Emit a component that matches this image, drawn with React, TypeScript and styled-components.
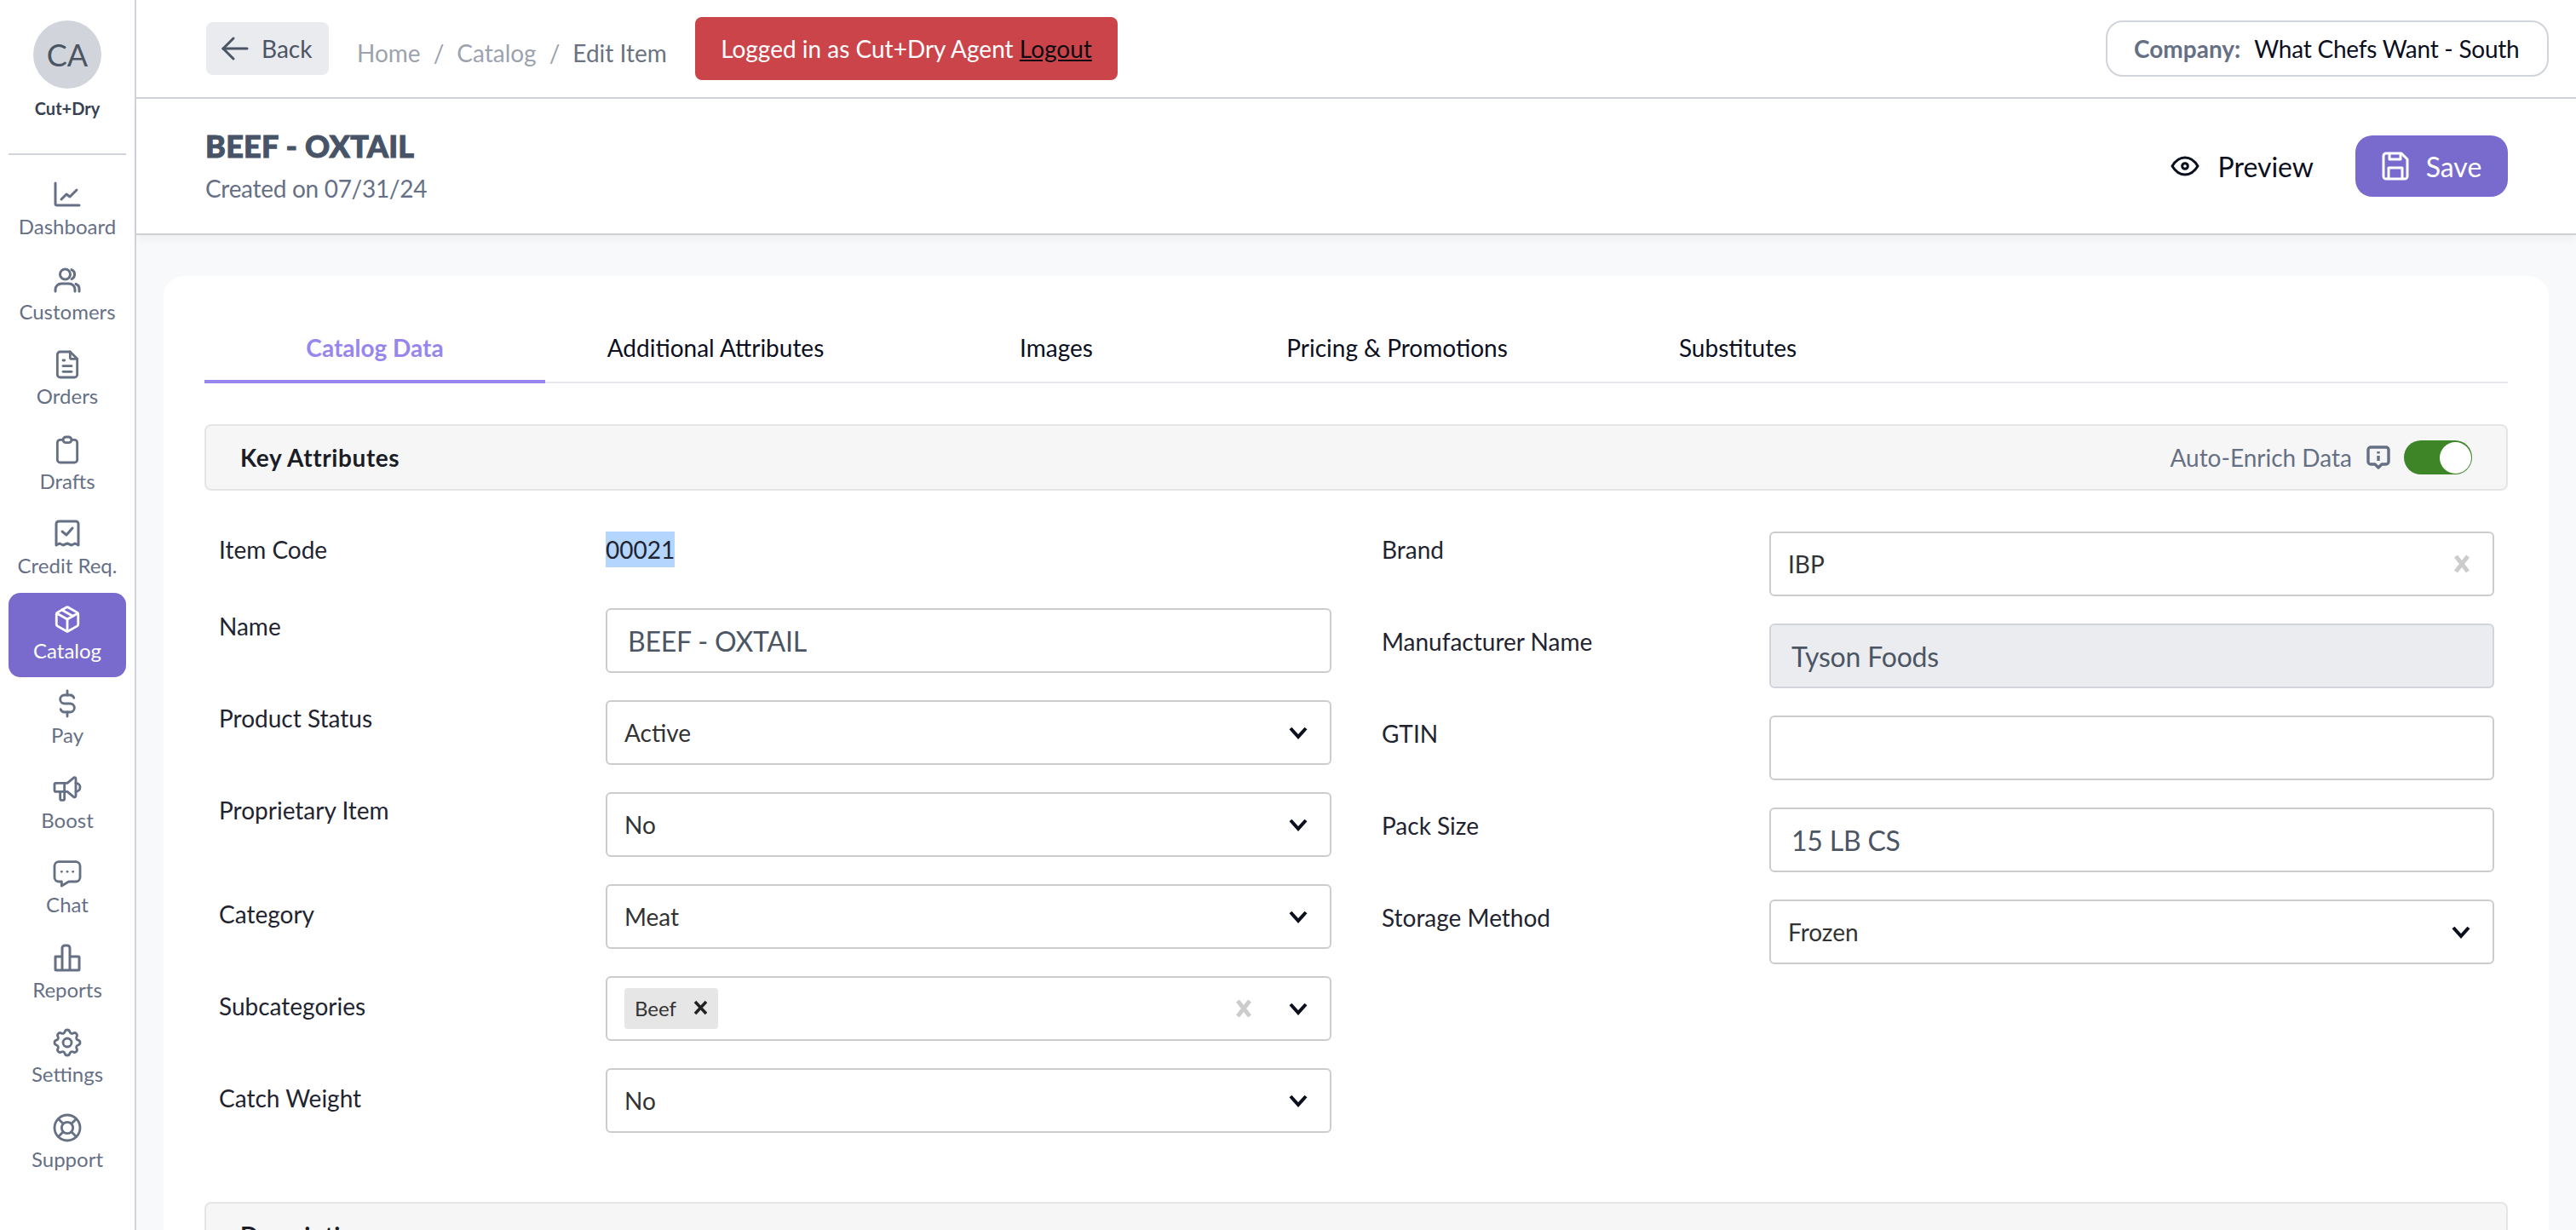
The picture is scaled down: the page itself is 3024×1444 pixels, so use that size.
import React from 'react'
import styled, { createGlobalStyle } from 'styled-components'
import { Package } from 'lucide-react'
import {
  TbArrowLeft,
  TbClipboard,
  TbCurrencyDollar,
  TbEye,
  TbFileText,
  TbLifebuoy,
  TbMessageDots,
  TbSettings,
  TbSpeakerphone,
} from 'react-icons/tb'

const GlobalStyle = createGlobalStyle`
  html, body {
    margin: 0;
    height: 100%;
    overflow: hidden;
    background: #f8f9fb;
    font-family: Lato, "Noto Sans", sans-serif;
  }
  * { box-sizing: border-box; }
`

const Page = styled.div`
  display: flex;
  width: 3024px;
  height: 1444px;
  overflow: hidden;
`

const Sidebar = styled.nav`
  flex: 0 0 160px;
  display: flex;
  flex-direction: column;
  align-items: center;
  background: #fff;
  border-right: 2px solid #d1d5db;
  padding-top: 24px;
`

const Avatar = styled.div`
  width: 80px;
  height: 80px;
  border-radius: 50%;
  background: #d1d5db;
  color: #4b5563;
  font-size: 36px;
  display: flex;
  align-items: center;
  justify-content: center;
`

const OrgName = styled.div`
  margin-top: 11px;
  font-size: 20px;
  line-height: 24px;
  font-weight: 700;
  color: #374151;
`

const NavDivider = styled.div`
  width: 138px;
  height: 2px;
  background: #d1d5db;
  margin: 41px 0 16px;
`

const NavItem = styled.a<{ $active?: boolean }>`
  width: 138px;
  height: 99.5px;
  flex: none;
  display: flex;
  flex-direction: column;
  align-items: center;
  padding-top: 11px;
  border-radius: 14px;
  font-size: 24px;
  line-height: 30px;
  color: ${(p) => (p.$active ? '#fff' : '#667085')};
  background: ${(p) => (p.$active ? '#786bcd' : 'transparent')};
  svg { width: 40px; height: 40px; margin-bottom: 2px; flex: none; }
`

const CatalogIcon = styled(Package)`
  && {
    width: 34px;
    height: 34px;
    margin: 3px 0 5px;
  }
`

const Main = styled.div`
  flex: 1;
  min-width: 0;
  display: flex;
  flex-direction: column;
`

const TopBar = styled.header`
  height: 116px;
  flex: none;
  display: flex;
  align-items: center;
  background: #fff;
  border-bottom: 2px solid #d1d5db;
  padding: 0 32px 0 82px;
`

const BackButton = styled.button`
  width: 144px;
  height: 62px;
  display: flex;
  align-items: center;
  gap: 7px;
  padding: 0 0 0 10px;
  border: 0;
  border-radius: 8px;
  background: #e9ebef;
  color: #4b5563;
  font: 28px Lato, sans-serif;
  svg { width: 48px; height: 48px; flex: none; stroke-width: 1.5; }
`

const Crumbs = styled.div`
  display: flex;
  gap: 15px;
  margin: 10px 0 0 33px;
  font-size: 28px;
  white-space: nowrap;
  color: #9ca3af;
  width: 397px;
`

const CrumbCurrent = styled.span`
  color: #6b7280;
`

const Banner = styled.div`
  width: 496px;
  height: 74px;
  display: flex;
  align-items: center;
  justify-content: center;
  border-radius: 8px;
  background: #cb444a;
  color: #fff;
  font-size: 28px;
  white-space: pre;
  a { color: #0b0b12; text-decoration: underline; }
`

const CompanyBox = styled.div`
  margin-left: auto;
  width: 520px;
  height: 66px;
  display: flex;
  align-items: center;
  padding-left: 31px;
  border: 2px solid #d1d5db;
  border-radius: 20px;
  font-size: 28px;
  white-space: pre;
  color: #0b0f1e;
  b { color: #667085; margin-right: 16px; }
  span { letter-spacing: -0.25px; }
`

const ItemHeader = styled.section`
  height: 160px;
  flex: none;
  display: flex;
  align-items: center;
  justify-content: space-between;
  padding: 0 80px 0 81px;
  background: #fff;
  border-bottom: 2px solid #cdcfd2;
  box-shadow: 0 4px 10px rgba(0, 0, 0, 0.05);
  position: relative;
`

const Title = styled.h1`
  margin: -4px 0 0;
  font-size: 36px;
  line-height: 44px;
  font-weight: 900;
  letter-spacing: 0.25px;
  -webkit-text-stroke: 1px #475467;
  color: #475467;
`

const Created = styled.div`
  margin-top: 11px;
  font-size: 28px;
  line-height: 34px;
  letter-spacing: -0.3px;
  color: #667085;
`

const Actions = styled.div`
  display: flex;
  align-items: center;
  gap: 49px;
`

const PreviewButton = styled.div`
  display: flex;
  align-items: center;
  gap: 18px;
  font-size: 32px;
  color: #0b0f1e;
  svg { width: 40px; height: 40px; stroke-width: 1.8; }
`

const SaveButton = styled.button`
  width: 179px;
  height: 72px;
  display: flex;
  align-items: center;
  justify-content: center;
  gap: 20px;
  border: 0;
  border-radius: 20px;
  background: #786bcd;
  color: #fff;
  font: 32px Lato, sans-serif;
`

const Body = styled.main`
  flex: 1;
  min-height: 0;
  padding: 48px 32px 0;
`

const Card = styled.div`
  background: #fff;
  border-radius: 24px 24px 0 0;
  height: 100%;
  padding: 0 48px;
`

const TabBar = styled.div`
  height: 126px;
  margin-bottom: 48px;
  display: flex;
  align-items: flex-end;
  border-bottom: 2px solid #e5e7eb;
`

const Tab = styled.div<{ $active?: boolean }>`
  width: 400px;
  height: 86px;
  margin-bottom: -2px;
  padding-top: 6px;
  display: flex;
  align-items: center;
  justify-content: center;
  font-size: 28px;
  font-weight: ${(p) => (p.$active ? 700 : 400)};
  color: ${(p) => (p.$active ? '#9686ee' : '#0b0f1e')};
  border-bottom: 4px solid ${(p) => (p.$active ? '#9686ee' : 'transparent')};
`

const SectionBar = styled.div`
  height: 78px;
  display: flex;
  align-items: center;
  padding: 0 40px;
  background: #f6f6f6;
  border: 2px solid #e5e5e5;
  border-radius: 8px;
  font-size: 28px;
  font-weight: 700;
  letter-spacing: 0.6px;
  color: #1a1d26;
`

const AutoEnrich = styled.div`
  margin-left: auto;
  display: flex;
  align-items: center;
  font-weight: 400;
  letter-spacing: 0;
  color: #667085;
`

const InfoIcon = styled.svg`
  width: 28px;
  height: 28px;
  margin: 0 16px 0 17px;
`

const Toggle = styled.div`
  width: 80px;
  height: 40px;
  display: flex;
  justify-content: flex-end;
  align-items: center;
  padding: 0 1.5px;
  border-radius: 20px;
  background: #3d8527;
  &::after {
    content: '';
    width: 37px;
    height: 37px;
    border-radius: 50%;
    background: #fff;
  }
`

const FormGrid = styled.div`
  display: grid;
  grid-template-columns: 1fr 1fr;
  column-gap: 59px;
  padding: 48px 16px 0 17px;
  margin-bottom: 81px;
`

const FormColumn = styled.div`
  display: flex;
  flex-direction: column;
  gap: 32px;
`

const Row = styled.div<{ $short?: boolean; $labelWidth?: number }>`
  display: grid;
  grid-template-columns: ${(p) => p.$labelWidth ?? 454}px 1fr;
  min-height: ${(p) => (p.$short ? '58px' : '76px')};
`

const Label = styled.label<{ $center?: boolean }>`
  font-size: 28px;
  line-height: 34px;
  color: #1f2430;
  padding-top: ${(p) => (p.$center ? '18px' : '4px')};
`

const Field = styled.div<{ $disabled?: boolean }>`
  height: 76px;
  display: flex;
  align-items: center;
  padding: 0 20px;
  border: 2px solid ${(p) => (p.$disabled ? '#d1d5db' : '#cccccc')};
  border-radius: 6px;
  background: ${(p) => (p.$disabled ? '#eaecf0' : '#fff')};
  font-size: 28px;
  color: #333;
`

const InputText = styled.span`
  margin-left: 4px;
  font-size: 32px;
  letter-spacing: -0.2px;
  color: #4b5563;
`

const PlainValue = styled.div`
  font-size: 28px;
  color: #1f2430;
  span {
    display: inline-block;
    line-height: 42px;
    background: #b4d5fe;
  }
`

const Chip = styled.span`
  display: flex;
  align-items: center;
  height: 48px;
  width: 110px;
  padding: 0 2px 2px 12px;
  justify-content: space-between;
  background: #e6e6e6;
  border-radius: 4px;
  font-size: 24px;
  color: #333;
`

const Spacer = styled.div`
  flex: 1;
`

const ClearGlyph = styled.svg<{ $dark?: boolean }>`
  width: 20px;
  height: 22px;
  flex: none;
  margin-right: ${(p) => (p.$dark ? 8 : 6)}px;
  stroke: ${(p) => (p.$dark ? '#222' : '#cccccc')};
  stroke-width: ${(p) => (p.$dark ? 3.5 : 5)};
  fill: none;
`

const Chevron = styled.svg`
  width: 24px;
  height: 24px;
  flex: none;
  margin-left: 36px;
  margin-right: 5px;
  stroke: #0b0f1e;
  stroke-width: 4;
  fill: none;
`

const ChevronIcon = () => (
  <Chevron viewBox="0 0 24 24">
    <path d="M3 7l9 10 9-10" />
  </Chevron>
)

const ClearIcon = ({ dark }: { dark?: boolean }) => (
  <ClearGlyph viewBox="0 0 20 22" $dark={dark}>
    {dark ? <path d="M3 4l13 14M16 4L3 18" /> : <path d="M3 2l14 18M17 2L3 20" />}
  </ClearGlyph>
)

const SelectField = ({ value }: { value: string }) => (
  <Field>
    {value}
    <Spacer />
    <ChevronIcon />
  </Field>
)

// drawn icons share the 40px nav box
const NavSvg = ({ children }: { children: React.ReactNode }) => (
  <svg viewBox="0 0 40 40" fill="none" stroke="currentColor" strokeWidth="3" strokeLinecap="round" strokeLinejoin="round">
    {children}
  </svg>
)

const ChartIcon = () => (
  <NavSvg>
    <path d="M6 6v24a2 2 0 0 0 2 2h26" />
    <path d="M13 25l6-6 4 3 8-8" />
  </NavSvg>
)

const CustomersIcon = () => (
  <NavSvg>
    <circle cx="17.5" cy="13" r="6" />
    <path d="M25 7.5a6 6 0 0 1 0 11" />
    <path d="M6 33v-2a7 7 0 0 1 7-7h9a7 7 0 0 1 7 7v2" />
    <path d="M30 24.5a6 6 0 0 1 4 6V33" />
  </NavSvg>
)

const ReceiptIcon = () => (
  <NavSvg>
    <path d="M7 33V8a3 3 0 0 1 3-3h20a3 3 0 0 1 3 3v25l-4-2-4 2-5-2-5 2-4-2z" />
    <path d="M14 17l5 4 7-8" />
  </NavSvg>
)

const ReportsIcon = () => (
  <NavSvg>
    <path d="M6 18h8v16H7a1 1 0 0 1-1-1zM14 8a3 3 0 0 1 3-3h3a3 3 0 0 1 3 3v26h-9zM23 18h10a1 1 0 0 1 1 1v14a1 1 0 0 1-1 1H23z" />
  </NavSvg>
)

const SaveIcon = () => (
  <svg width="32" height="34" viewBox="0 0 32 34" fill="none" stroke="currentColor" strokeWidth="3" strokeLinejoin="round">
    <path d="M5 2h18l7 7v20a3 3 0 0 1-3 3H5a3 3 0 0 1-3-3V5a3 3 0 0 1 3-3z" />
    <path d="M9 2v7h13V2M8 32V19h16v13" />
  </svg>
)

const navItems = [
  { label: 'Dashboard', icon: <ChartIcon /> },
  { label: 'Customers', icon: <CustomersIcon /> },
  { label: 'Orders', icon: <TbFileText strokeWidth={1.7} /> },
  { label: 'Drafts', icon: <TbClipboard strokeWidth={1.7} /> },
  { label: 'Credit Req.', icon: <ReceiptIcon /> },
  { label: 'Catalog', icon: <CatalogIcon />, active: true },
  { label: 'Pay', icon: <TbCurrencyDollar strokeWidth={1.7} /> },
  { label: 'Boost', icon: <TbSpeakerphone strokeWidth={1.7} /> },
  { label: 'Chat', icon: <TbMessageDots strokeWidth={1.7} /> },
  { label: 'Reports', icon: <ReportsIcon /> },
  { label: 'Settings', icon: <TbSettings strokeWidth={1.7} /> },
  { label: 'Support', icon: <TbLifebuoy strokeWidth={1.7} /> },
]

const tabs = ['Catalog Data', 'Additional Attributes', 'Images', 'Pricing & Promotions', 'Substitutes']

const App = () => {
  return (
    <Page>
      <GlobalStyle />
      <Sidebar>
        <Avatar>CA</Avatar>
        <OrgName>Cut+Dry</OrgName>
        <NavDivider />
        {navItems.map((item) => (
          <NavItem key={item.label} $active={item.active}>
            {item.icon}
            {item.label}
          </NavItem>
        ))}
      </Sidebar>
      <Main>
        <TopBar>
          <BackButton>
            <TbArrowLeft />
            Back
          </BackButton>
          <Crumbs>
            <span>Home</span>
            <span>/</span>
            <span>Catalog</span>
            <span>/</span>
            <CrumbCurrent>Edit Item</CrumbCurrent>
          </Crumbs>
          <Banner>
            Logged in as Cut+Dry Agent <a>Logout</a>
          </Banner>
          <CompanyBox>
            <b>Company:</b> <span>What Chefs Want - South</span>
          </CompanyBox>
        </TopBar>
        <ItemHeader>
          <div>
            <Title>BEEF - OXTAIL</Title>
            <Created>Created on 07/31/24</Created>
          </div>
          <Actions>
            <PreviewButton>
              <TbEye />
              Preview
            </PreviewButton>
            <SaveButton>
              <SaveIcon />
              Save
            </SaveButton>
          </Actions>
        </ItemHeader>
        <Body>
          <Card>
            <TabBar>
              {tabs.map((tab, i) => (
                <Tab key={tab} $active={i === 0}>
                  {tab}
                </Tab>
              ))}
            </TabBar>
            <SectionBar>
              Key Attributes
              <AutoEnrich>
                Auto-Enrich Data
                <InfoIcon viewBox="0 0 28 28" fill="none" stroke="#667085" strokeWidth="3.4" strokeLinejoin="round">
                  <path d="M5 2h18a3 3 0 0 1 3 3v14a3 3 0 0 1-3 3h-5l-4 4-4-4H5a3 3 0 0 1-3-3V5a3 3 0 0 1 3-3z" />
                  <path d="M14 7v2.5M14 12v6" />
                </InfoIcon>
                <Toggle />
              </AutoEnrich>
            </SectionBar>
            <FormGrid>
              <FormColumn>
                <Row $short>
                  <Label>Item Code</Label>
                  <PlainValue>
                    <span>00021</span>
                  </PlainValue>
                </Row>
                <Row>
                  <Label>Name</Label>
                  <Field>
                    <InputText>BEEF - OXTAIL</InputText>
                  </Field>
                </Row>
                <Row>
                  <Label>Product Status</Label>
                  <SelectField value="Active" />
                </Row>
                <Row>
                  <Label>Proprietary Item</Label>
                  <SelectField value="No" />
                </Row>
                <Row>
                  <Label $center>Category</Label>
                  <SelectField value="Meat" />
                </Row>
                <Row>
                  <Label $center>Subcategories</Label>
                  <Field>
                    <Chip>
                      Beef
                      <ClearIcon dark />
                    </Chip>
                    <Spacer />
                    <ClearIcon />
                    <ChevronIcon />
                  </Field>
                </Row>
                <Row>
                  <Label $center>Catch Weight</Label>
                  <SelectField value="No" />
                </Row>
              </FormColumn>
              <FormColumn>
                <Row $labelWidth={455}>
                  <Label>Brand</Label>
                  <Field>
                    IBP
                    <Spacer />
                    <ClearIcon />
                  </Field>
                </Row>
                <Row $labelWidth={455}>
                  <Label>Manufacturer Name</Label>
                  <Field $disabled>
                    <InputText>Tyson Foods</InputText>
                  </Field>
                </Row>
                <Row $labelWidth={455}>
                  <Label>GTIN</Label>
                  <Field />
                </Row>
                <Row $labelWidth={455}>
                  <Label>Pack Size</Label>
                  <Field>
                    <InputText>15 LB CS</InputText>
                  </Field>
                </Row>
                <Row $labelWidth={455}>
                  <Label>Storage Method</Label>
                  <SelectField value="Frozen" />
                </Row>
              </FormColumn>
            </FormGrid>
            <SectionBar>Description</SectionBar>
          </Card>
        </Body>
      </Main>
    </Page>
  )
}

export default App
